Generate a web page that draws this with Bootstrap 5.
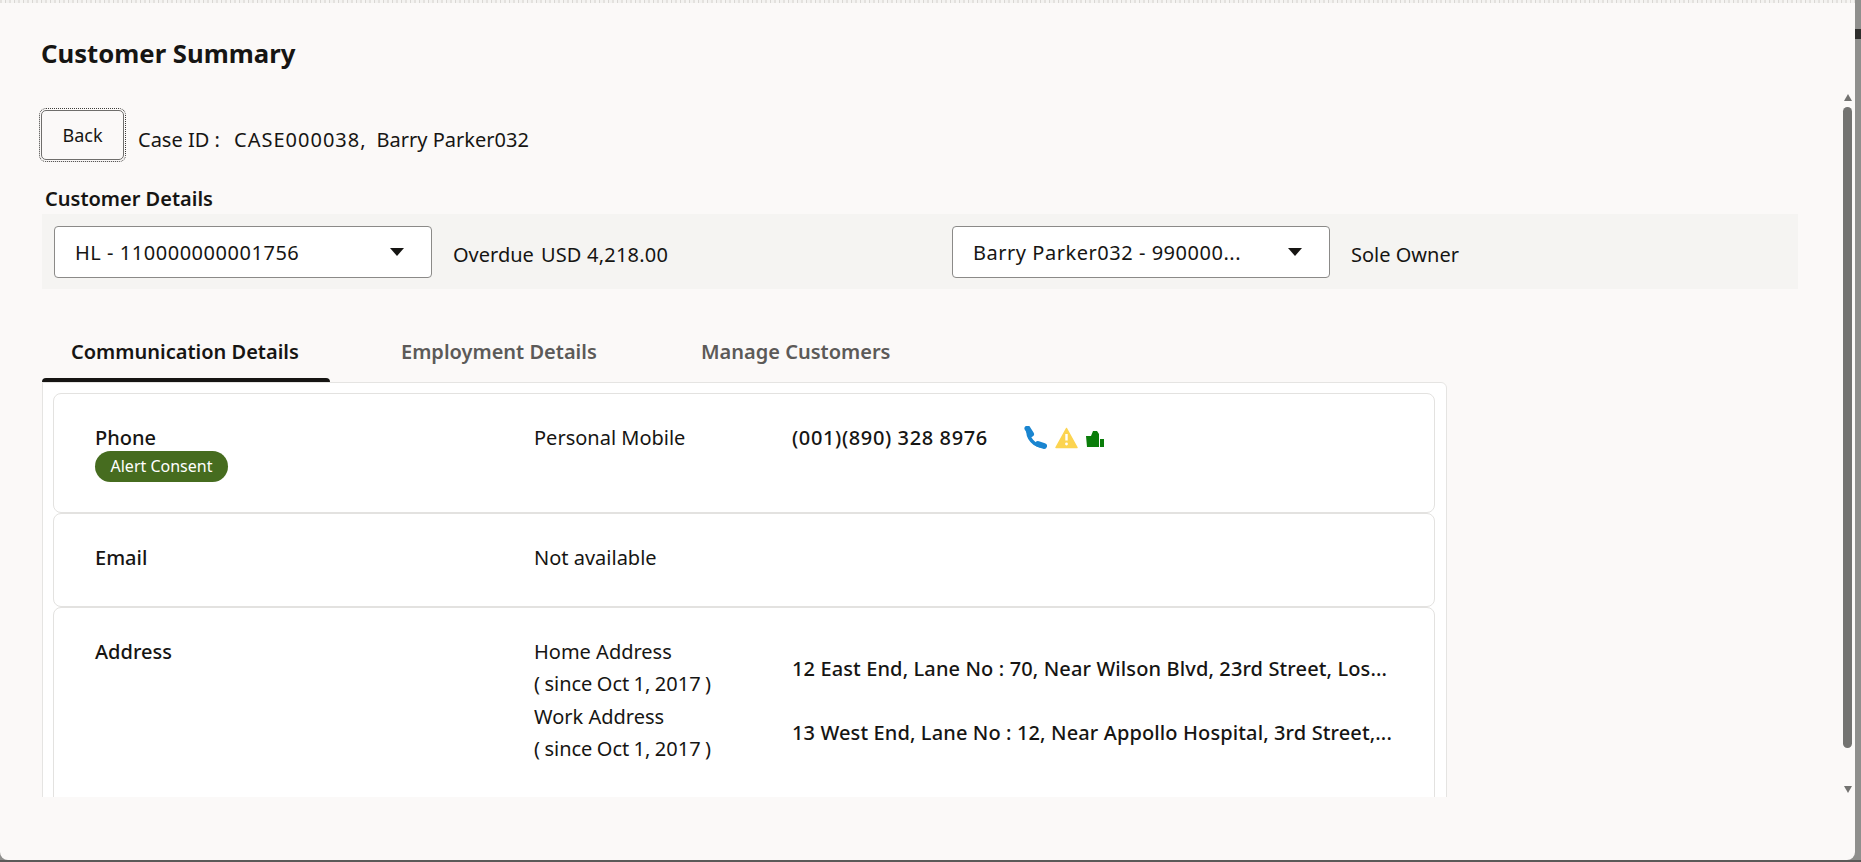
<!DOCTYPE html>
<html lang="en">
<head>
  <meta charset="UTF-8">
  <title>Customer Summary</title>
  <link href="https://cdn.jsdelivr.net/npm/bootstrap@5.3.0/dist/css/bootstrap.min.css" rel="stylesheet">
  <style>
    html, body { height: 100%; overflow: hidden; }
    body {
      background: #8f8f8d;
      color: #161513;
      font-family: "Noto Sans", "Open Sans", sans-serif;
      font-size: 20px;
      line-height: 24px;
    }
    .top-noise {
      height: 3px;
      background: repeating-linear-gradient(90deg, #e4e2df 0 2px, #f6f5f3 2px 5px, #d9d7d4 5px 6px, #f3f2f0 6px 9px);
    }
    .shell {
      width: 1855px;
      height: 860px;
      background: #fbf9f8;
      border-radius: 0 0 8px 8px;
      overflow: hidden;
    }
    .bottom-edge { height: 2px; background: #5a5a58; }
    /* the window behind the dialog, seen on the right */
    .behind-bar { position: absolute; top: 29px; right: 0; width: 6px; height: 10px; background: #2e2e2c; }
    .main-col { width: 1843px; padding: 36px 0 0 41px; }
    .page-title { font-size: 25.7px; font-weight: 700; line-height: 30px; margin: 0 0 41px; }
    .back-btn {
      width: 83px; height: 50px; padding: 0;
      background: #fbf9f8; color: #161513;
      font-size: 18px; line-height: 22px;
      border: 1px solid #6f6e6c; border-radius: 5px;
      outline: 1px dotted #3d3c3a; outline-offset: 1px;
    }
    .case-line { margin-left: 14px; padding-top: 18px; }
    .case-line span { margin-right: 9px; }
    .case-line .case-num { letter-spacing: 1px; margin-right: 10px; }
    .section-title { font-size: 20px; font-weight: 600; margin: 27px 0 3px 4px; }
    .detail-band {
      width: 1756px; height: 75px; background: #f5f4f2;
      margin-left: 1px;
      padding: 12px 12px 0;
    }
    .fake-select {
      width: 378px; height: 52px; background: #fff;
      border: 1px solid #8b8a88; border-radius: 4px;
      padding: 2px 27px 0 20px;
      white-space: nowrap;
      flex: none;
    }
    .fake-select .num-text { letter-spacing: .53px; }
    .caret-down { width: 0; height: 0; border: 7px solid transparent; border-top: 8px solid #161513; border-bottom: 0; margin-top: -2px; }
    .band-text { margin-left: 21px; padding-top: 17px; white-space: nowrap; }
    .overdue-cell { width: 336px; padding-left: 21px; padding-top: 17px; white-space: nowrap; flex: none; }
    .overdue-cell .usd-text { margin-left: 7px; letter-spacing: .2px; }
    .spacer-cell { width: 184px; flex: none; }
    .tab-bar { margin-top: 26px; height: 67px; margin-left: 1px; }
    .tab-bar .nav-link {
      height: 67px; padding: 24px 0 0 0;
      color: #5c5a58; font-weight: 600; font-size: 20px; line-height: 26px;
      position: relative;
    }
    .tab-bar .tab-first { width: 288px; padding-left: 29px; color: #161513; }
    /* chamfered active marker sits over the panel's top edge */
    .tab-bar .tab-first::after {
      content: ""; position: absolute; left: 0; right: 0; bottom: 0; height: 4px;
      background: #161513; border-radius: 4px 4px 0 0;
    }
    .tab-bar .tab-second { width: 371px; padding-left: 71px; }
    .clip-area { width: 1405px; height: 415px; overflow: hidden; margin-left: 1px; }
    .panel-box {
      background: #fff; border: 1px solid #e5e4e2; border-radius: 0 6px 0 0;
      padding: 10px 10px 0;
      height: 440px;
    }
    .info-row {
      border: 1px solid #e3e2e0; border-radius: 8px;
      padding: 32px 0 0 41px;
      width: 1382px;
    }
    .phone-row { height: 120px; }
    .email-row { height: 94px; }
    .address-row { height: 210px; }
    .label-col { width: 439px; font-weight: 500; flex: none; }
    .type-col { width: 257px; flex: none; }
    .value-col { width: 620px; flex: none; font-weight: 500; letter-spacing: .12px; margin-left: 1px; }
    .phone-value { margin-left: 1px; }
    .phone-num { font-weight: 500; letter-spacing: .62px; }
    .consent-pill {
      display: inline-block; width: 133px; height: 31px; margin-top: 1px;
      background: #466c1f; color: #fff;
      border-radius: 16px;
      font-size: 16px; line-height: 30px; text-align: center; font-weight: 400;
    }
    .icon-set { margin-left: 36px; }
    .warn-icon { margin-top: 1px; }
    .thumb-icon { margin-top: 5px; }
    .addr-type { line-height: 32.4px; margin-top: -4px; }
    .since-text { word-spacing: -.8px; }
    .addr-value { height: 64px; line-height: 64px; white-space: nowrap; }
    .addr-values { margin-top: -3px; }
    .scroll-col { width: 9px; margin: 91px 0 0 0; }
    .arrow-up { width: 0; height: 0; border: 4.5px solid transparent; border-bottom: 7px solid #737371; border-top: 0; }
    .arrow-down { width: 0; height: 0; border: 4.5px solid transparent; border-top: 7px solid #737371; border-bottom: 0; margin-top: 38px; }
    .scroll-thumb { width: 9px; height: 641px; margin-top: 6px; background: #737371; border-radius: 5px; }
  </style>
</head>
<body class="position-relative">
  <div class="behind-bar"></div>

  <div class="shell">
    <div class="top-noise"></div>
    <div class="d-flex">
      <div class="main-col">
        <h1 class="page-title">Customer Summary</h1>

        <div class="d-flex">
          <button type="button" class="btn back-btn">Back</button>
          <div class="case-line"><span>Case ID :</span> <span class="case-num">CASE000038,</span><span>Barry Parker032</span></div>
        </div>

        <div class="section-title">Customer Details</div>
        <div class="detail-band d-flex align-items-start">
          <div class="fake-select d-flex align-items-center justify-content-between">
            <span class="num-text">HL - 110000000001756</span>
            <i class="caret-down"></i>
          </div>
          <div class="overdue-cell">Overdue<span class="usd-text">USD 4,218.00</span></div>
          <div class="spacer-cell"></div>
          <div class="fake-select d-flex align-items-center justify-content-between">
            <span class="num-text">Barry Parker032 - 990000...</span>
            <i class="caret-down"></i>
          </div>
          <div class="band-text">Sole Owner</div>
        </div>

        <ul class="nav tab-bar">
          <li class="nav-item"><a class="nav-link tab-first" href="#">Communication Details</a></li>
          <li class="nav-item"><a class="nav-link tab-second" href="#">Employment Details</a></li>
          <li class="nav-item"><a class="nav-link" href="#">Manage Customers</a></li>
        </ul>

        <div class="clip-area">
          <div class="panel-box">
            <div class="info-row phone-row d-flex">
              <div class="label-col">
                <div>Phone</div>
                <span class="consent-pill">Alert Consent</span>
              </div>
              <div class="type-col">Personal Mobile</div>
              <div class="phone-value d-flex align-items-start">
                <span class="phone-num">(001)(890) 328 8976</span>
                <span class="icon-set d-flex gap-2">
                  <svg width="23" height="24" viewBox="0 0 23 24"><path d="M4 3C3 12 10 20 19 20" fill="none" stroke="#1a85d0" stroke-width="3.6"/><path d="M3.5 2.5L7 8" stroke="#1a85d0" stroke-width="6" stroke-linecap="round"/><path d="M14 18L20 20" stroke="#1a85d0" stroke-width="6" stroke-linecap="round"/></svg>
                  <svg class="warn-icon" width="23" height="22" viewBox="0 0 23 22"><path d="M11.5 1.5L22 20.5H1z" fill="#fcd450" stroke="#fcd450" stroke-width="1.5" stroke-linejoin="round"/><path d="M11.5 7v6.5" stroke="#fff" stroke-width="2.4"/><circle cx="11.5" cy="17" r="1.4" fill="#fff"/></svg>
                  <svg class="thumb-icon" width="18" height="17" viewBox="0 0 18 17"><path d="M0 5H5L7 0H11L13 3V16H1z" fill="#0a7d0a"/><rect x="14" y="8" width="4" height="8" fill="#0a7d0a"/></svg>
                </span>
              </div>
            </div>

            <div class="info-row email-row d-flex">
              <div class="label-col">Email</div>
              <div class="type-col">Not available</div>
            </div>

            <div class="info-row address-row d-flex">
              <div class="label-col">Address</div>
              <div class="type-col addr-type">
                <div>Home Address</div>
                <div class="since-text">( since Oct 1, 2017 )</div>
                <div>Work Address</div>
                <div class="since-text">( since Oct 1, 2017 )</div>
              </div>
              <div class="value-col addr-values">
                <div class="addr-value">12 East End, Lane No : 70, Near Wilson Blvd, 23rd Street, Los...</div>
                <div class="addr-value">13 West End, Lane No : 12, Near Appollo Hospital, 3rd Street,...</div>
              </div>
            </div>
          </div>
        </div>
      </div>

      <div class="scroll-col d-flex flex-column align-items-center">
        <i class="arrow-up"></i>
        <div class="scroll-thumb"></div>
        <i class="arrow-down"></i>
      </div>
    </div>
  </div>
  <div class="bottom-edge"></div>

  <script src="https://cdn.jsdelivr.net/npm/bootstrap@5.3.0/dist/js/bootstrap.bundle.min.js"></script>
</body>
</html>
